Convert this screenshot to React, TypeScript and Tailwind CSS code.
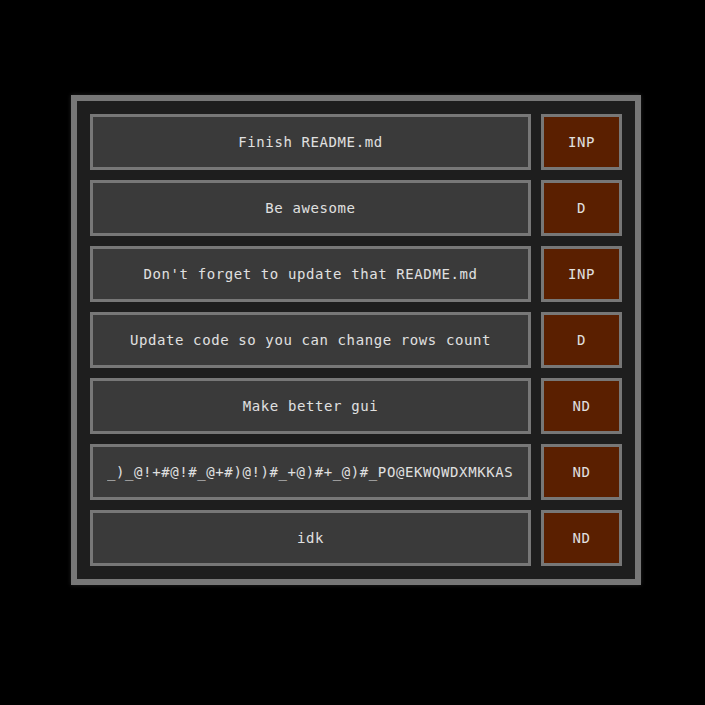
import React from "react";

const rows = [
  { text: "Finish README.md", status: "INP" },
  { text: "Be awesome", status: "D" },
  { text: "Don't forget to update that README.md", status: "INP" },
  { text: "Update code so you can change rows count", status: "D" },
  { text: "Make better gui", status: "ND" },
  { text: "_)_@!+#@!#_@+#)@!)#_+@)#+_@)#_PO@EKWQWDXMKKAS:LDKQWE", status: "ND" },
  { text: "idk", status: "ND" },
];

export default function App() {
  return (
    <div className="min-h-screen bg-black pl-[71px] pt-[95px] font-['DejaVu_Sans_Mono',monospace] text-[14px] tracking-[0.6px] text-[#e0e0e0]">
      <div className="flex w-[570px] flex-col gap-[10px] border-[6px] border-[#777777] bg-[#1e1e1e] p-[13px] shadow-[0_0_4px_rgba(60,60,60,0.6)]">
        {rows.map((row, i) => (
          <div key={i} className="flex gap-[10px]">
            <div className="flex h-[56px] w-[441px] items-center border-[3px] border-[#777777] bg-[#3a3a3a] px-[14px]">
              <div className="w-full overflow-hidden whitespace-nowrap text-center leading-[20px]">
                {row.text}
              </div>
            </div>
            <button className="h-[56px] w-[81px] border-[3px] border-[#777777] bg-[#5a1f00]">
              {row.status}
            </button>
          </div>
        ))}
      </div>
    </div>
  );
}
